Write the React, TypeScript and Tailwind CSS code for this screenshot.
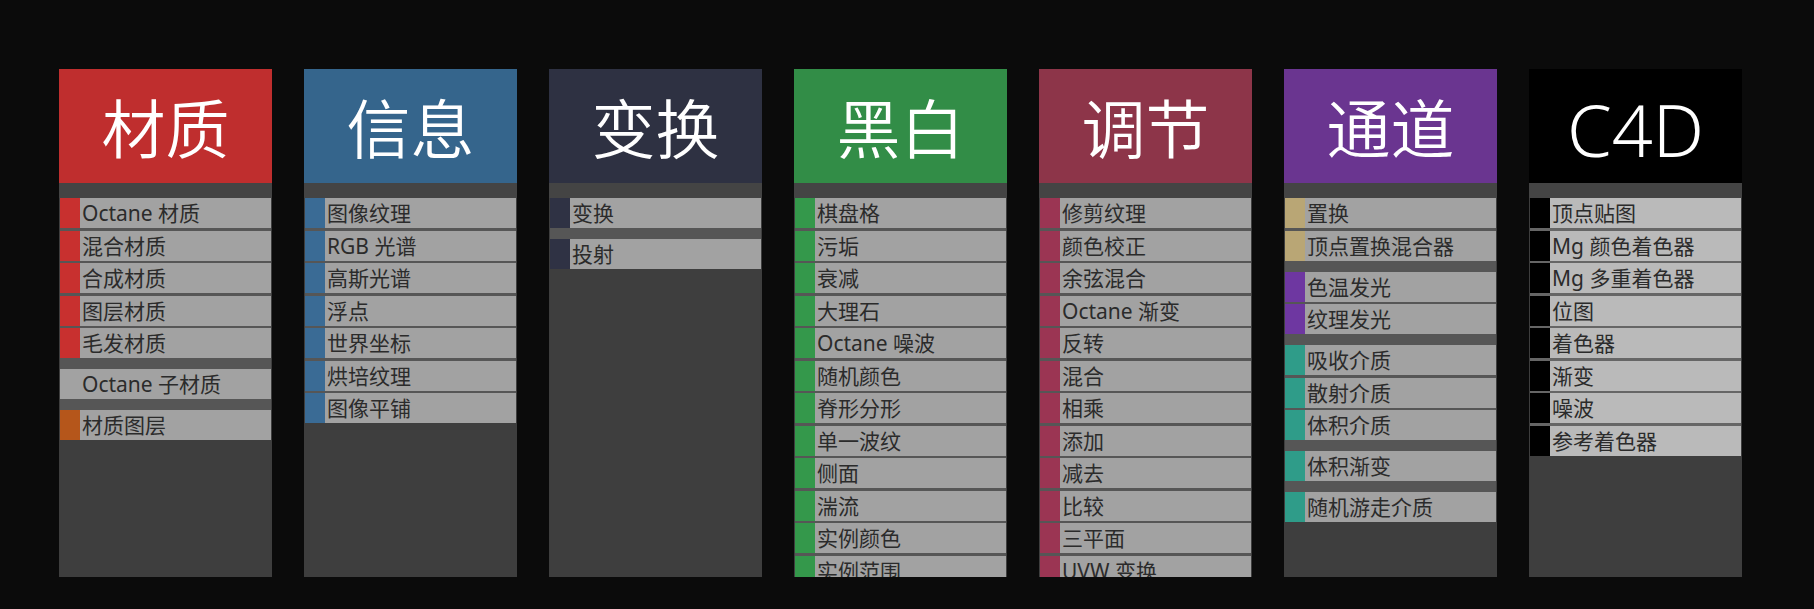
import React from "react";

type Item = { label: string; bar: string };

interface IColumn {
  title: string;
  headerBg: string;
  titleSize: string;
  rowBg: string;
  sepBg: string;
  groups: Item[][];
}

const red = "bg-[#c8302f]";
const blue = "bg-[#3a6b95]";
const navy = "bg-[#2f3244]";
const green = "bg-[#34984b]";
const maroon = "bg-[#9b3553]";
const tan = "bg-[#b9a675]";
const purple = "bg-[#6e37a1]";
const teal = "bg-[#2f9c89]";

const mk = (bar: string, labels: string[]): Item[] => labels.map((label) => ({ label, bar }));

const columns: IColumn[] = [
  {
    title: "材质",
    headerBg: "bg-[#bf2e2e]",
    titleSize: "text-[64px]",
    rowBg: "bg-[#a2a2a2]",
    sepBg: "bg-[#565656]",
    groups: [
      mk(red, ["Octane 材质", "混合材质", "合成材质", "图层材质", "毛发材质"]),
      mk("bg-[#a2a2a2]", ["Octane 子材质"]),
      mk("bg-[#b5561b]", ["材质图层"]),
    ],
  },
  {
    title: "信息",
    headerBg: "bg-[#35658c]",
    titleSize: "text-[64px]",
    rowBg: "bg-[#a2a2a2]",
    sepBg: "bg-[#565656]",
    groups: [mk(blue, ["图像纹理", "RGB 光谱", "高斯光谱", "浮点", "世界坐标", "烘培纹理", "图像平铺"])],
  },
  {
    title: "变换",
    headerBg: "bg-[#2e3142]",
    titleSize: "text-[64px]",
    rowBg: "bg-[#a2a2a2]",
    sepBg: "bg-[#565656]",
    groups: [mk(navy, ["变换"]), mk(navy, ["投射"])],
  },
  {
    title: "黑白",
    headerBg: "bg-[#328d47]",
    titleSize: "text-[64px]",
    rowBg: "bg-[#a2a2a2]",
    sepBg: "bg-[#565656]",
    groups: [
      mk(green, [
        "棋盘格",
        "污垢",
        "衰减",
        "大理石",
        "Octane 噪波",
        "随机颜色",
        "脊形分形",
        "单一波纹",
        "侧面",
        "湍流",
        "实例颜色",
        "实例范围",
      ]),
    ],
  },
  {
    title: "调节",
    headerBg: "bg-[#8d3549]",
    titleSize: "text-[64px]",
    rowBg: "bg-[#a2a2a2]",
    sepBg: "bg-[#565656]",
    groups: [
      mk(maroon, [
        "修剪纹理",
        "颜色校正",
        "余弦混合",
        "Octane 渐变",
        "反转",
        "混合",
        "相乘",
        "添加",
        "减去",
        "比较",
        "三平面",
        "UVW 变换",
      ]),
    ],
  },
  {
    title: "通道",
    headerBg: "bg-[#6a3590]",
    titleSize: "text-[64px]",
    rowBg: "bg-[#a2a2a2]",
    sepBg: "bg-[#565656]",
    groups: [
      mk(tan, ["置换", "顶点置换混合器"]),
      mk(purple, ["色温发光", "纹理发光"]),
      mk(teal, ["吸收介质", "散射介质", "体积介质"]),
      mk(teal, ["体积渐变"]),
      mk(teal, ["随机游走介质"]),
    ],
  },
  {
    title: "C4D",
    headerBg: "bg-[#000000]",
    titleSize: "text-[72px]",
    rowBg: "bg-[#bababa]",
    sepBg: "bg-[#666666]",
    groups: [mk("bg-[#000000]", ["顶点贴图", "Mg 颜色着色器", "Mg 多重着色器", "位图", "着色器", "渐变", "噪波", "参考着色器"])],
  },
];

const Row = ({ item, rowBg }: { item: Item; rowBg: string }) => (
  <div className="flex h-[30px] shrink-0">
    <div className={`w-[20px] shrink-0 ${item.bar}`} />
    <div className={`flex-1 pl-[2px] text-[21px] leading-[30px] text-[#2b2b2b] whitespace-nowrap overflow-hidden ${rowBg}`}>
      {item.label}
    </div>
  </div>
);

const Column = ({ col }: { col: IColumn }) => (
  <div className="w-[213px] h-[508px] flex flex-col shrink-0">
    <div
      className={`h-[114px] shrink-0 flex items-center justify-center pt-[5px] text-white font-[350] ${col.headerBg} ${col.titleSize}`}
    >
      {col.title}
    </div>
    <div className="flex-1 bg-[#3e3e3e] overflow-hidden flex flex-col">
      <div className="h-[15px] shrink-0 bg-[#444444]" />
      <div className={`mx-px flex flex-col gap-[11px] ${col.sepBg}`}>
        {col.groups.map((group, gi) => (
          <div key={gi} className="flex flex-col gap-[2.5px]">
            {group.map((item) => (
              <Row key={item.label} item={item} rowBg={col.rowBg} />
            ))}
          </div>
        ))}
      </div>
    </div>
  </div>
);

export default function App() {
  return (
    <div
      className="w-full h-[609px] bg-[#0b0b0b] pt-[69px] pl-[59px] flex gap-[32px] overflow-hidden"
      style={{ fontFamily: '"Noto Sans", "Noto Sans CJK SC", sans-serif' }}
    >
      {columns.map((col) => (
        <Column key={col.title} col={col} />
      ))}
    </div>
  );
}
